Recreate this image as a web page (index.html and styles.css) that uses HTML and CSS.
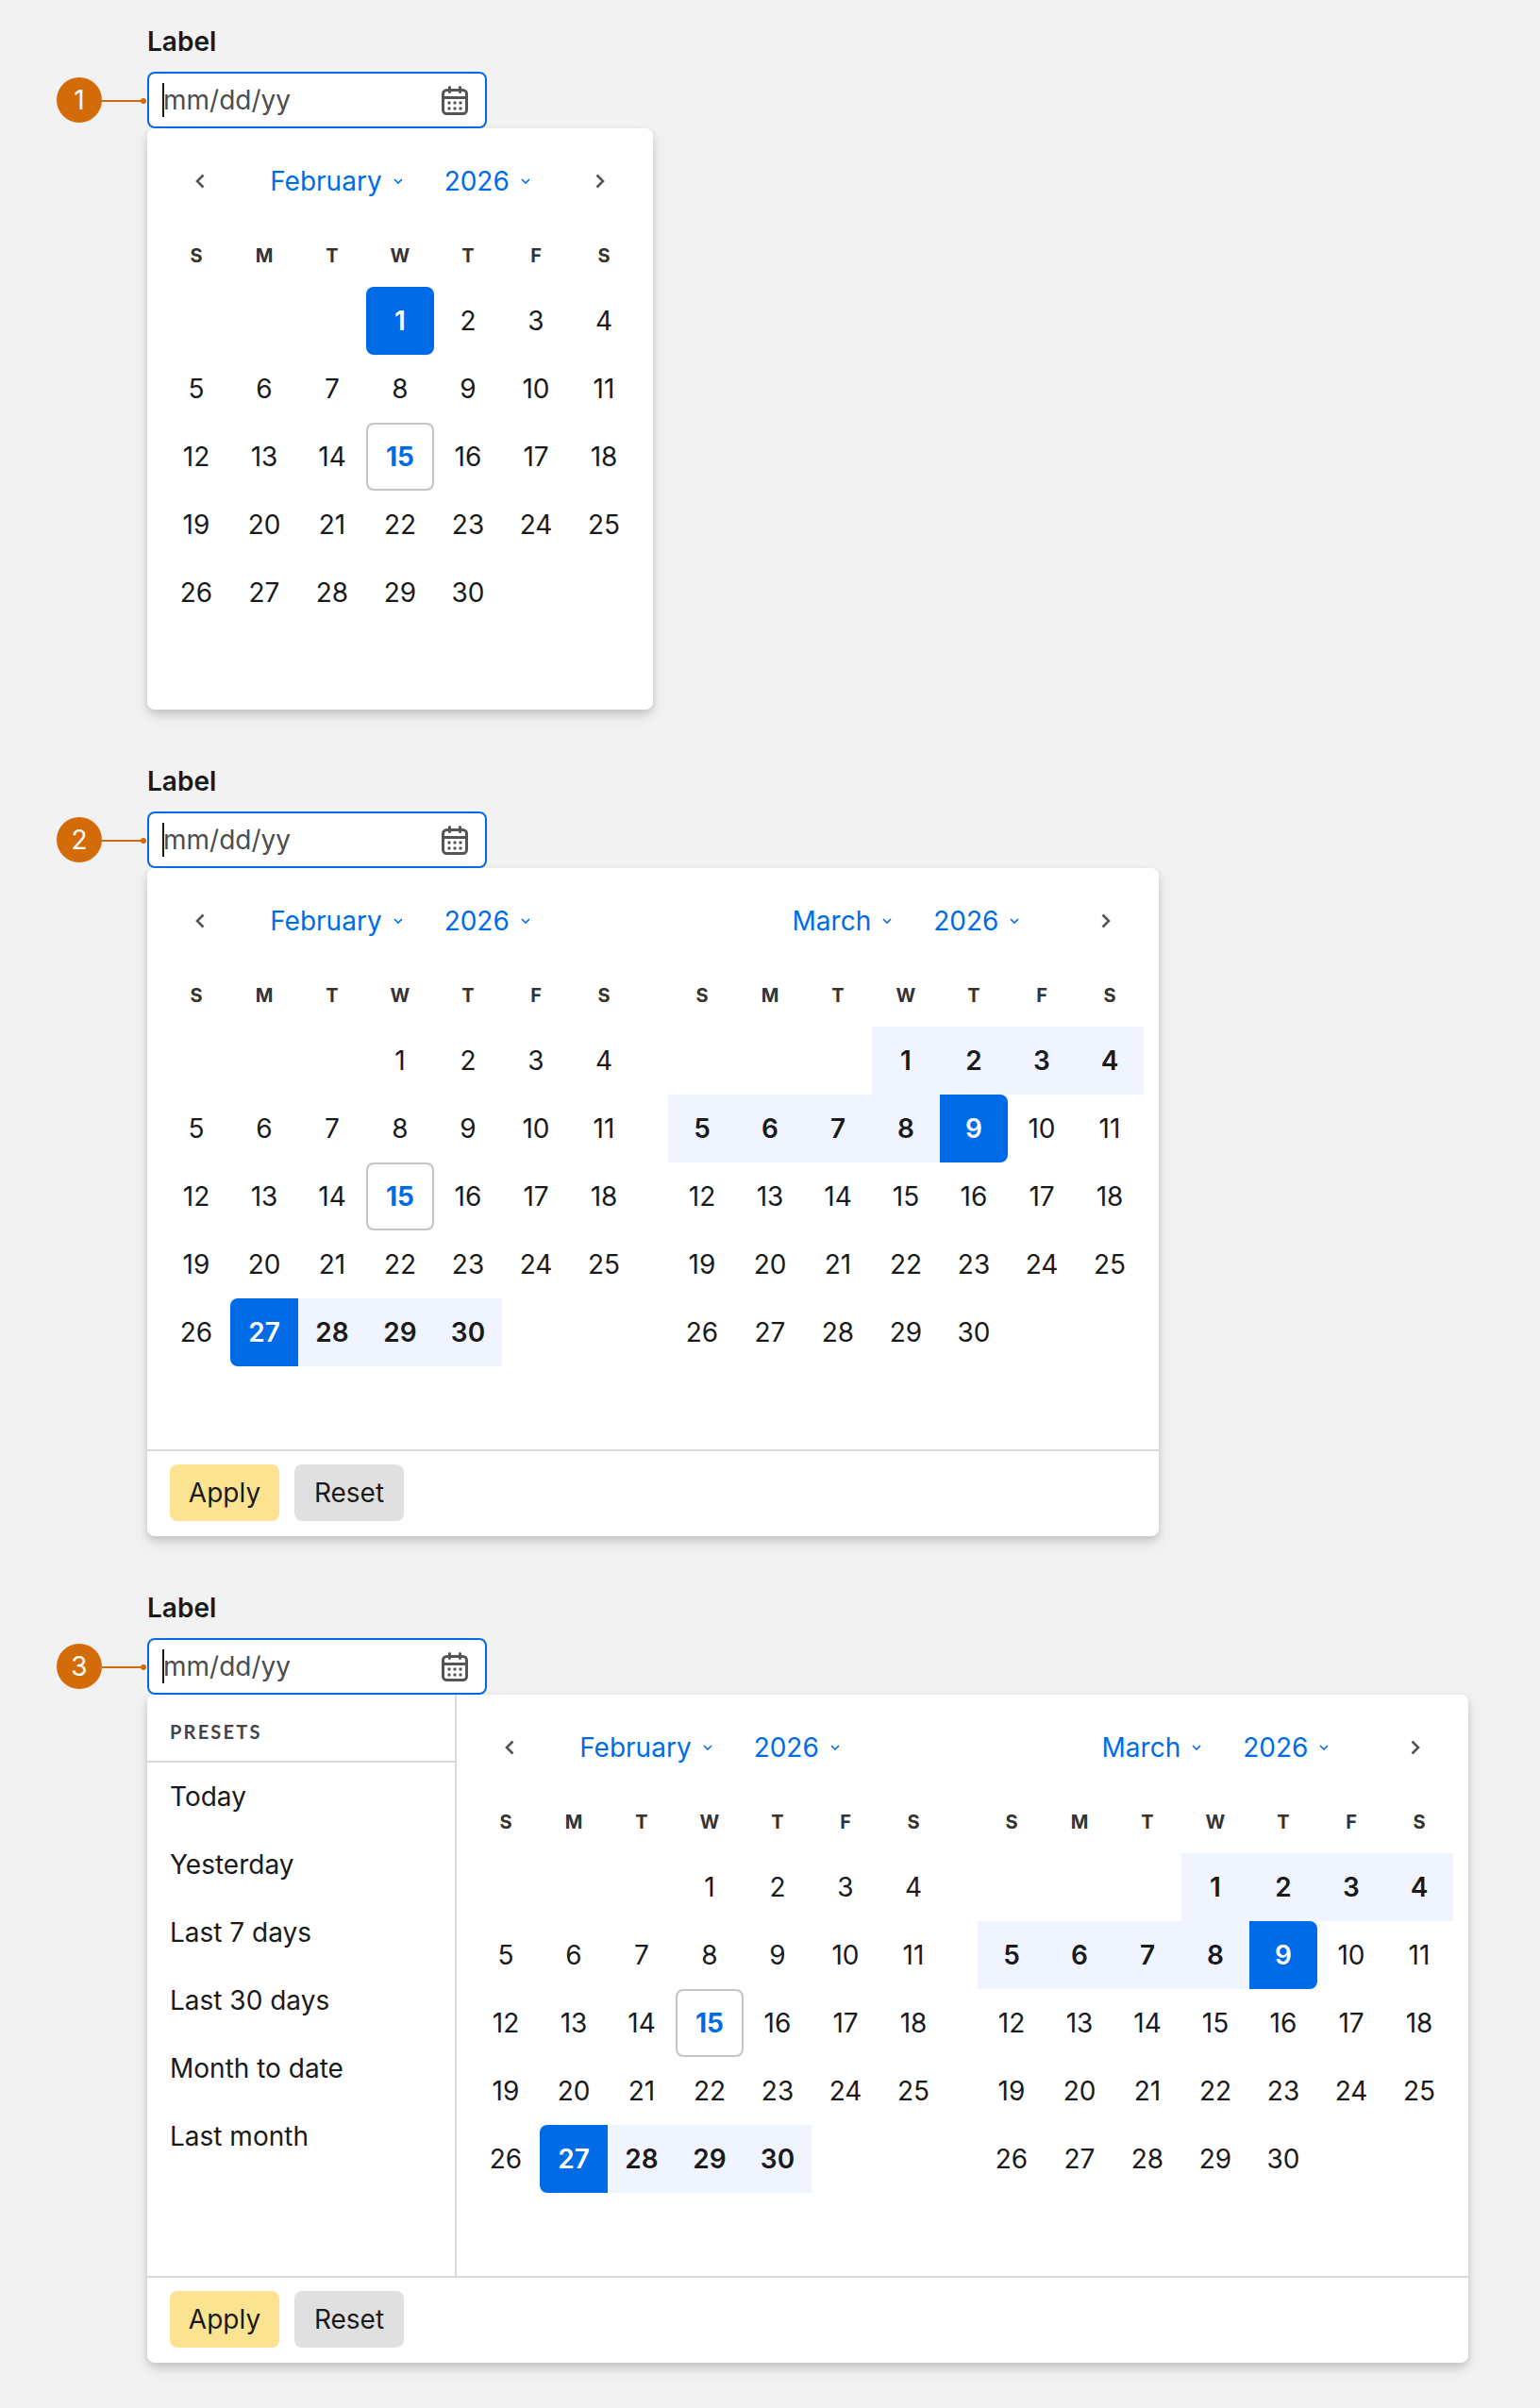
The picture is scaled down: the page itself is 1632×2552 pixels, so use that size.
FILE: index.html
```html
<!DOCTYPE html>
<html lang="en">
<head>
<meta charset="utf-8">
<title>Date picker</title>
<link rel="stylesheet" href="styles.css">
</head>
<body>
<svg class="defs" width="0" height="0" aria-hidden="true">
  <symbol id="cal" viewBox="0 0 28 31"><rect x="1.5" y="4.5" width="25" height="25" rx="4" fill="none" stroke="currentColor" stroke-width="3"/><path d="M1.5 12.5h25" stroke="currentColor" stroke-width="3" fill="none"/><path d="M8.5 1.5v5M19.500 1.500v5" stroke="currentColor" stroke-width="3" stroke-linecap="round" fill="none"/><g fill="currentColor"><circle cx="8" cy="18" r="1.700"/><circle cx="14" cy="18" r="1.700"/><circle cx="20" cy="18" r="1.700"/><circle cx="8" cy="24" r="1.700"/><circle cx="14" cy="24" r="1.700"/><circle cx="20" cy="24" r="1.700"/></g></symbol>
  <symbol id="down" viewBox="0 0 10 6"><path d="M1 1l4 4 4-4" fill="none" stroke="currentColor" stroke-width="1.600"/></symbol>
  <symbol id="left" viewBox="0 0 10 16"><path d="M8.500 1.500L2 8l6.500 6.500" fill="none" stroke="currentColor" stroke-width="2.600"/></symbol>
  <symbol id="right" viewBox="0 0 10 16"><path d="M1.500 1.500L8 8l-6.500 6.500" fill="none" stroke="currentColor" stroke-width="2.600"/></symbol>
</svg>

<section class="demo">
  <div class="label">Label</div>
  <div class="field"><span class="badge">1</span><span class="leader"></span><span class="placeholder"><i class="caret"></i>mm/dd/yy</span><svg class="cal-icon"><use href="#cal"/></svg></div>
  <div class="popup">
    <div class="body">
      <div class="month">
        <div class="nav"><button class="arrow"><svg class="chev"><use href="#left"/></svg></button><div class="selects"><span class="select">February<svg class="drop"><use href="#down"/></svg></span><span class="select">2026<svg class="drop"><use href="#down"/></svg></span></div><button class="arrow"><svg class="chev"><use href="#right"/></svg></button></div>
        <div class="grid">
          <span class="wd">S</span><span class="wd">M</span><span class="wd">T</span><span class="wd">W</span><span class="wd">T</span><span class="wd">F</span><span class="wd">S</span>
          <span class="d"></span><span class="d"></span><span class="d"></span><span class="d sel">1</span><span class="d">2</span><span class="d">3</span><span class="d">4</span>
          <span class="d">5</span><span class="d">6</span><span class="d">7</span><span class="d">8</span><span class="d">9</span><span class="d">10</span><span class="d">11</span>
          <span class="d">12</span><span class="d">13</span><span class="d">14</span><span class="d today">15</span><span class="d">16</span><span class="d">17</span><span class="d">18</span>
          <span class="d">19</span><span class="d">20</span><span class="d">21</span><span class="d">22</span><span class="d">23</span><span class="d">24</span><span class="d">25</span>
          <span class="d">26</span><span class="d">27</span><span class="d">28</span><span class="d">29</span><span class="d">30</span>
        </div>
      </div>
    </div>
  </div>
</section>

<section class="demo">
  <div class="label">Label</div>
  <div class="field"><span class="badge">2</span><span class="leader"></span><span class="placeholder"><i class="caret"></i>mm/dd/yy</span><svg class="cal-icon"><use href="#cal"/></svg></div>
  <div class="popup">
    <div class="body">
      <div class="month">
        <div class="nav"><button class="arrow"><svg class="chev"><use href="#left"/></svg></button><div class="selects"><span class="select">February<svg class="drop"><use href="#down"/></svg></span><span class="select">2026<svg class="drop"><use href="#down"/></svg></span></div><span class="arrow"></span></div>
        <div class="grid">
          <span class="wd">S</span><span class="wd">M</span><span class="wd">T</span><span class="wd">W</span><span class="wd">T</span><span class="wd">F</span><span class="wd">S</span>
          <span class="d"></span><span class="d"></span><span class="d"></span><span class="d">1</span><span class="d">2</span><span class="d">3</span><span class="d">4</span>
          <span class="d">5</span><span class="d">6</span><span class="d">7</span><span class="d">8</span><span class="d">9</span><span class="d">10</span><span class="d">11</span>
          <span class="d">12</span><span class="d">13</span><span class="d">14</span><span class="d today">15</span><span class="d">16</span><span class="d">17</span><span class="d">18</span>
          <span class="d">19</span><span class="d">20</span><span class="d">21</span><span class="d">22</span><span class="d">23</span><span class="d">24</span><span class="d">25</span>
          <span class="d">26</span><span class="d sel start">27</span><span class="d range">28</span><span class="d range">29</span><span class="d range">30</span>
        </div>
      </div>
      <div class="month">
        <div class="nav"><span class="arrow"></span><div class="selects"><span class="select">March<svg class="drop"><use href="#down"/></svg></span><span class="select">2026<svg class="drop"><use href="#down"/></svg></span></div><button class="arrow"><svg class="chev"><use href="#right"/></svg></button></div>
        <div class="grid">
          <span class="wd">S</span><span class="wd">M</span><span class="wd">T</span><span class="wd">W</span><span class="wd">T</span><span class="wd">F</span><span class="wd">S</span>
          <span class="d"></span><span class="d"></span><span class="d"></span><span class="d range">1</span><span class="d range">2</span><span class="d range">3</span><span class="d range">4</span>
          <span class="d range">5</span><span class="d range">6</span><span class="d range">7</span><span class="d range">8</span><span class="d sel end">9</span><span class="d">10</span><span class="d">11</span>
          <span class="d">12</span><span class="d">13</span><span class="d">14</span><span class="d">15</span><span class="d">16</span><span class="d">17</span><span class="d">18</span>
          <span class="d">19</span><span class="d">20</span><span class="d">21</span><span class="d">22</span><span class="d">23</span><span class="d">24</span><span class="d">25</span>
          <span class="d">26</span><span class="d">27</span><span class="d">28</span><span class="d">29</span><span class="d">30</span>
        </div>
      </div>
    </div>
    <div class="footer"><button class="btn apply">Apply</button><button class="btn reset">Reset</button></div>
  </div>
</section>

<section class="demo">
  <div class="label">Label</div>
  <div class="field"><span class="badge">3</span><span class="leader"></span><span class="placeholder"><i class="caret"></i>mm/dd/yy</span><svg class="cal-icon"><use href="#cal"/></svg></div>
  <div class="popup">
    <div class="body">
      <aside class="presets">
        <div class="presets-title">PRESETS</div>
        <div class="preset">Today</div>
        <div class="preset">Yesterday</div>
        <div class="preset">Last 7 days</div>
        <div class="preset">Last 30 days</div>
        <div class="preset">Month to date</div>
        <div class="preset">Last month</div>
      </aside>
      <div class="month">
        <div class="nav"><button class="arrow"><svg class="chev"><use href="#left"/></svg></button><div class="selects"><span class="select">February<svg class="drop"><use href="#down"/></svg></span><span class="select">2026<svg class="drop"><use href="#down"/></svg></span></div><span class="arrow"></span></div>
        <div class="grid">
          <span class="wd">S</span><span class="wd">M</span><span class="wd">T</span><span class="wd">W</span><span class="wd">T</span><span class="wd">F</span><span class="wd">S</span>
          <span class="d"></span><span class="d"></span><span class="d"></span><span class="d">1</span><span class="d">2</span><span class="d">3</span><span class="d">4</span>
          <span class="d">5</span><span class="d">6</span><span class="d">7</span><span class="d">8</span><span class="d">9</span><span class="d">10</span><span class="d">11</span>
          <span class="d">12</span><span class="d">13</span><span class="d">14</span><span class="d today">15</span><span class="d">16</span><span class="d">17</span><span class="d">18</span>
          <span class="d">19</span><span class="d">20</span><span class="d">21</span><span class="d">22</span><span class="d">23</span><span class="d">24</span><span class="d">25</span>
          <span class="d">26</span><span class="d sel start">27</span><span class="d range">28</span><span class="d range">29</span><span class="d range">30</span>
        </div>
      </div>
      <div class="month">
        <div class="nav"><span class="arrow"></span><div class="selects"><span class="select">March<svg class="drop"><use href="#down"/></svg></span><span class="select">2026<svg class="drop"><use href="#down"/></svg></span></div><button class="arrow"><svg class="chev"><use href="#right"/></svg></button></div>
        <div class="grid">
          <span class="wd">S</span><span class="wd">M</span><span class="wd">T</span><span class="wd">W</span><span class="wd">T</span><span class="wd">F</span><span class="wd">S</span>
          <span class="d"></span><span class="d"></span><span class="d"></span><span class="d range">1</span><span class="d range">2</span><span class="d range">3</span><span class="d range">4</span>
          <span class="d range">5</span><span class="d range">6</span><span class="d range">7</span><span class="d range">8</span><span class="d sel end">9</span><span class="d">10</span><span class="d">11</span>
          <span class="d">12</span><span class="d">13</span><span class="d">14</span><span class="d">15</span><span class="d">16</span><span class="d">17</span><span class="d">18</span>
          <span class="d">19</span><span class="d">20</span><span class="d">21</span><span class="d">22</span><span class="d">23</span><span class="d">24</span><span class="d">25</span>
          <span class="d">26</span><span class="d">27</span><span class="d">28</span><span class="d">29</span><span class="d">30</span>
        </div>
      </div>
    </div>
    <div class="footer"><button class="btn apply">Apply</button><button class="btn reset">Reset</button></div>
  </div>
</section>
</body>
</html>
```
FILE: styles.css
```css
* { box-sizing: border-box; }
html, body { margin: 0; }
body {
  width: 1632px;
  height: 2552px;
  padding: 28px 0 0 156px;
  background: #f2f2f2;
  font-family: Inter, "Liberation Sans", sans-serif;
  font-size: 28px;
  color: #1a1a1a;
  overflow: hidden;
}
.defs { position: absolute; }
.demo { margin-bottom: 60px; }
.label { height: 32px; line-height: 32px; font-weight: 600; margin-bottom: 16px; }
.field {
  position: relative;
  width: 360px;
  height: 60px;
  display: flex;
  align-items: center;
  justify-content: space-between;
  padding: 0 18px 0 14px;
  background: #fff;
  border: 2px solid #006be6;
  border-radius: 8px;
}
.placeholder { position: relative; color: #4d4d4d; line-height: 36px; padding-left: 1px; }
.caret { position: absolute; left: 0; top: 0; width: 2px; height: 36px; background: #1a1a1a; }
.cal-icon { width: 28px; height: 31px; color: #555; }
.badge {
  position: absolute;
  left: -98px;
  top: 4px;
  width: 48px;
  height: 48px;
  border-radius: 50%;
  background: #d36b08;
  color: #fff;
  text-align: center;
  line-height: 48px;
}
.leader { position: absolute; left: -50px; top: 28px; width: 46px; height: 2px; background: #d36b08; }
.leader::after { content: ""; position: absolute; right: -1px; top: -2px; width: 6px; height: 6px; border-radius: 50%; background: #d36b08; }
.popup {
  width: fit-content;
  background: #fff;
  border-radius: 8px;
  box-shadow: 0 4px 8px rgba(0, 0, 0, .14), 0 8px 16px rgba(0, 0, 0, .08);
}
.body { display: flex; }
.month { width: 536px; padding: 16px; }
.nav { height: 80px; display: flex; align-items: center; justify-content: space-between; padding: 0 4px; }
.arrow { width: 72px; height: 72px; padding: 0; border: 0; background: none; display: flex; align-items: center; justify-content: center; color: #555; }
.chev { width: 10px; height: 16px; }
.selects { display: flex; gap: 44px; color: #006be6; }
.select { display: flex; align-items: center; gap: 12px; line-height: 36px; }
.drop { width: 10px; height: 6px; }
.grid { display: grid; grid-template-columns: repeat(7, 72px); grid-auto-rows: 72px; grid-template-rows: 72px repeat(6, 72px); }
.wd { padding-top: 6px; display: flex; align-items: center; justify-content: center; font-size: 20px; font-weight: 700; color: #333; }
.d { display: flex; align-items: center; justify-content: center; }
.sel { background: #006be6; color: #fff; font-weight: 600; border-radius: 8px; }
.start { border-radius: 8px 0 0 8px; }
.end { border-radius: 0 8px 8px 0; }
.range { background: #f0f4ff; font-weight: 600; }
.today { border: 2px solid #c4c4c4; border-radius: 8px; color: #006be6; font-weight: 700; }
.presets { width: 328px; border-right: 2px solid #d9d9d9; }
.presets-title {
  height: 72px;
  padding: 8px 24px 0;
  display: flex;
  align-items: center;
  border-bottom: 2px solid #d9d9d9;
  font-family: Lato, sans-serif;
  font-size: 20px;
  font-weight: 700;
  letter-spacing: 2.2px;
  color: #444;
}
.preset { height: 72px; line-height: 72px; padding: 0 24px; }
.footer { display: flex; gap: 16px; padding: 14px 24px 16px; border-top: 2px solid #d9d9d9; }
.btn { width: 116px; height: 60px; padding: 0; border: 0; border-radius: 8px; font: inherit; color: #1a1a1a; }
.apply { background: #fce391; }
.reset { background: #e0e0e0; }
```
